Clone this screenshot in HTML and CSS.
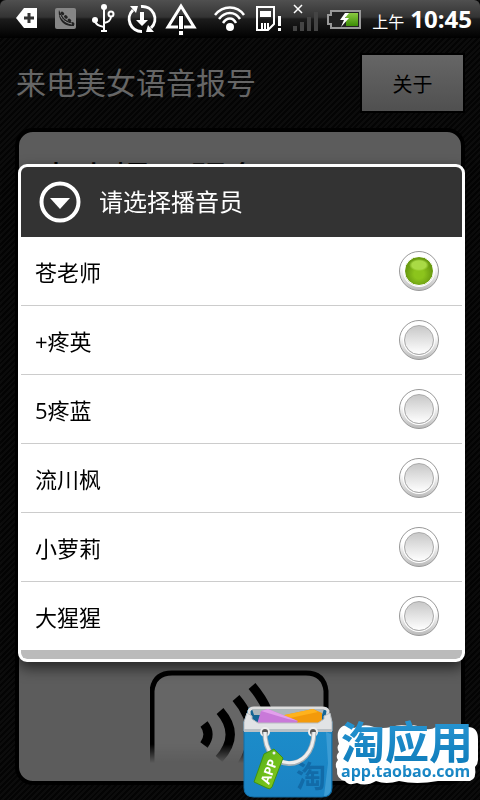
FILE: index.html
```html
<!DOCTYPE html>
<html lang="zh-CN">
<head>
    <meta charset="UTF-8">
    <meta name="viewport" content="width=device-width, initial-scale=1.0">
    <title>来电美女语音报号</title>
    <link rel="stylesheet" href="styles.css">
</head>
<body>
    <div class="status-bar">
        <div class="status-icons">
            <svg width="38" height="38" viewBox="8 0 38 38">
                <path d="M16 18L24 8H37V28H24Z" fill="#fff"/>
                <path d="M29 13V23M24 18H34" stroke="#333" stroke-width="3"/>
            </svg>
            <svg width="38" height="38" viewBox="46 0 38 38">
                <rect x="55" y="8" width="21" height="21" rx="2" fill="#868686"/>
                <path d="M59 10C58 15 60 27 74 26C74 23 73 23 70 22C65 20 62 17 59 10Z" fill="#222"/>
                <path d="M62 13L73 24" stroke="#222" stroke-width="3" stroke-linecap="round" stroke-dasharray="1 4"/>
                <path d="M60 15C62 20 66 23 72 24" stroke="#999" fill="none" stroke-width="1"/>
            </svg>
            <svg width="38" height="38" viewBox="84 0 38 38">
                <g fill="none" stroke="#fff" stroke-width="2">
                    <path d="M104 7V31M95 20C95 25 100 26 104 27M111 16C111 21 108 22 104 23"/>
                    <circle cx="111" cy="14" r="2.5"/>
                </g>
                <circle cx="104" cy="7" r="3" fill="#fff"/>
                <circle cx="95" cy="20" r="3" fill="#fff"/>
                <path d="M101 30H107V32H101Z" fill="#fff"/>
            </svg>
            <svg width="38" height="38" viewBox="122 0 38 38">
                <g fill="none" stroke="#fff" stroke-width="3">
                    <path d="M142 31.500A12.500 12.500 0 0 1 133 10M141 6.500A12.500 12.500 0 0 1 151 28"/>
                </g>
                <path d="M130 6H138L136 13ZM154 32H146L148 25Z" fill="#fff"/>
                <path d="M140 12H144V20H148L142 26L136 20H140Z" fill="#fff"/>
            </svg>
            <svg width="46" height="38" viewBox="160 0 46 38">
                <path d="M181 6L168 27H194Z" fill="none" stroke="#fff" stroke-width="3"/>
                <path d="M178 15H184V36H178Z" fill="#0c0c0c"/>
                <path d="M179 16H183V29H179ZM179 31H183V35H179Z" fill="#fff"/>
            </svg>
            <svg width="46" height="38" viewBox="206 0 46 38">
                <g fill="none" stroke="#fff" stroke-width="2.500">
                    <path d="M215 15C223 5 237 5 244 15M219 19C225 11 235 11 240 19M223 23C227 17 233 17 236 23"/>
                </g>
                <circle cx="230" cy="27" r="4" fill="#fff"/>
            </svg>
            <svg width="36" height="38" viewBox="252 0 36 38">
                <path d="M257 7H274V24L268 30H257Z" fill="none" stroke="#fff" stroke-width="2"/>
                <path d="M260 11H271V17H260ZM261 23H263V30H261ZM264 23H266V30H264ZM267 23H269V29H267ZM278 16H281V26H278ZM278 28H281V31H278Z" fill="#fff"/>
            </svg>
            <svg width="36" height="38" viewBox="288 0 36 38">
                <path d="M294 5L302 13M302 5L294 13" stroke="#fff" stroke-width="1.500"/>
                <path d="M293 26H297V31H293ZM300 22H304V31H300ZM307 17H311V31H307ZM314 12H318V31H314Z" fill="#444"/>
            </svg>
            <svg width="40" height="38" viewBox="324 0 40 38">
                <defs>
                    <linearGradient id="charge" x1="0" y1="0" x2="0" y2="1">
                        <stop offset="0" stop-color="#8bcb42"/>
                        <stop offset="1" stop-color="#3c8d05"/>
                    </linearGradient>
                </defs>
                <path d="M331 11H360V28H331V24H328V15H331Z" fill="#222" stroke="#999" stroke-width="2"/>
                <path d="M346 13H358V26H346Z" fill="url(#charge)"/>
                <path d="M345 13L340 20H344L341 27L349 18H345L349 13Z" fill="#fff"/>
            </svg>
        </div>
        <span class="period">上午</span>
        <span class="clock">10:45</span>
    </div>

    <header class="app-header">
        <h1>来电美女语音报号</h1>
        <button class="about">关于</button>
    </header>

    <main class="panel">
        <h2>来电提示服务</h2>
        <svg class="speaker" width="180" height="94" viewBox="0 0 180 94">
            <defs>
                <linearGradient id="fade" x1="0" y1="0" x2="0" y2="1">
                    <stop offset="0.800" stop-color="#fff"/>
                    <stop offset="1" stop-color="#000"/>
                </linearGradient>
                <mask id="fadeMask">
                    <rect width="180" height="94" fill="url(#fade)"/>
                </mask>
            </defs>
            <g mask="url(#fadeMask)">
                <path d="M2 110V22Q4 4 22 4H156Q174 4 176 22V110" fill="#666" stroke="#000" stroke-width="5"/>
                <g fill="none" stroke="#000" stroke-width="9">
                    <path d="M54 55Q62 65 54 76M70 42Q91 66 69 90M86 29Q116 64 87 103M102 17Q142 64 104 115"/>
                </g>
            </g>
        </svg>
    </main>

    <div class="overlay">
        <form class="dialog" role="dialog" aria-labelledby="dialog-title">
            <div class="dialog-header">
                <svg width="42" height="42" viewBox="0 0 42 42">
                    <circle cx="21" cy="21" r="18.500" fill="none" stroke="#fff" stroke-width="4"/>
                    <path d="M11 17H31L21 28Z" fill="#fff"/>
                </svg>
                <h2 id="dialog-title">请选择播音员</h2>
            </div>
            <div class="options">
                <label class="option">苍老师<input type="radio" name="voice" checked></label>
                <label class="option">+疼英<input type="radio" name="voice"></label>
                <label class="option">5疼蓝<input type="radio" name="voice"></label>
                <label class="option">流川枫<input type="radio" name="voice"></label>
                <label class="option">小萝莉<input type="radio" name="voice"></label>
                <label class="option">大猩猩<input type="radio" name="voice"></label>
            </div>
            <div class="dialog-footer"></div>
        </form>
    </div>

    <div class="store-badge">
        <svg width="240" height="100" viewBox="240 700 240 100">
            <defs>
                <linearGradient id="bag" x1="0" y1="0" x2="0" y2="1">
                    <stop offset="0" stop-color="#1c8fcb"/>
                    <stop offset="1" stop-color="#1b83c4"/>
                </linearGradient>
                <linearGradient id="brand" x1="0" y1="0" x2="0" y2="1">
                    <stop offset="0" stop-color="#2e9bd8"/>
                    <stop offset="1" stop-color="#0b79b8"/>
                </linearGradient>
                <linearGradient id="tag" x1="0" y1="0" x2="1" y2="1">
                    <stop offset="0" stop-color="#4fae1d"/>
                    <stop offset="1" stop-color="#8ccc18"/>
                </linearGradient>
            </defs>
            <!-- bag -->
            <path d="M244 722L249 708H327L332 722V788Q332 797 322 797H254Q244 797 244 788Z" fill="url(#bag)" stroke="#126fa8"/>
            <path d="M249 711Q250 708 254 708H322Q327 708 328 711L326 725H250Z" fill="#146594" stroke="#ddd" stroke-width="3"/>
            <path d="M252 709H324L322 715H254Z" fill="#aeb7bb"/>
            <path d="M280 716L313 709L322 713V724H290Z" fill="#f39a0b"/>
            <path d="M280 716L313 709L318 712L290 718Z" fill="#ffb21c"/>
            <path d="M257 724L261 711L268 709L298 721L294 726Z" fill="#c979d9"/>
            <path d="M261 711L268 709L298 721L288 719Z" fill="#e2a0ec"/>
            <path d="M247 713L252 716V719L258 723H318L324 719V716L330 713L332 722V731H244V722Z" fill="#e1e3e5" stroke="#b8bdc1"/>
            <path d="M244 729H332V732H244Z" fill="#b9c0c5"/>
            <path d="M326 732L331 734V790Q329 796 324 796L328 763Z" fill="#3b9cd4"/>
            <circle cx="265" cy="732" r="4" fill="#555" stroke="#eee" stroke-width="2"/>
            <circle cx="313" cy="732" r="4" fill="#555" stroke="#eee" stroke-width="2"/>
            <text class="bag-mark" x="296" y="787">淘</text>
            <path d="M265 732C264 772 313 776 314 732" fill="none" stroke="#a4aeb4" stroke-width="5"/>
            <path d="M265 732C264 771 313 775 314 732" fill="none" stroke="#eee" stroke-width="3"/>
            <path d="M264 754L274 749L283 758L272 787Q270 790 267 788L254 782Z" fill="url(#tag)" stroke="#3f9212"/>
            <circle cx="274" cy="753" r="1.500" fill="#eee"/>
            <text class="tag-text" transform="translate(269 785) rotate(-70)">APP</text>
            <!-- white sticker edge behind the store name -->
            <path d="M343 726Q349 724 354 728Q365 723 374 727Q383 729 391 727Q399 724 410 726Q416 724 421 728Q430 731 436 727H468Q478 727 478 739V760Q478 764 475 767Q477 779 470 781H438Q416 785 399 781Q386 785 376 781Q366 787 357 783Q348 786 345 781Q336 779 337 769Q334 764 338 760Q335 756 339 752Q336 747 339 744Q335 730 343 726Z" fill="#fff"/>
            <text class="store-name" x="341" y="759">淘应用</text>
            <text class="store-url" x="341" y="777">app.taobao.com</text>
        </svg>
    </div>
</body>
</html>
```
FILE: styles.css
```css
* {
    box-sizing: border-box;
}

body {
    margin: 0;
    min-height: 100vh;
    display: flex;
    flex-direction: column;
    font-family: "Open Sans", "Noto Sans CJK SC", sans-serif;
    background-color: #040404;
    background-image: repeating-linear-gradient(135deg, #040404 0, #040404 2px, #0c0c0c 2px, #0c0c0c 4px);
}

h1,
h2 {
    margin: 0;
    font-weight: normal;
}

/* Status bar */
.status-bar {
    display: flex;
    align-items: center;
    height: 38px;
    padding: 0 8px;
    color: #fff;
    background: linear-gradient(#505050, #333 45%, #1c1c1c 50%, #000);
    border-radius: 6px 6px 0 0;
    white-space: nowrap;
}

.status-icons {
    display: flex;
}

.period {
    margin-left: auto;
    margin-right: 6px;
    padding-top: 6px;
    font-size: 16px;
    line-height: 20px;
}

.clock {
    font-size: 24px;
    line-height: 38px;
    font-weight: bold;
}

/* Page behind the dialog */
.app-header {
    display: flex;
    align-items: center;
    justify-content: space-between;
    height: 90px;
    padding: 0 15px 0 16px;
}

.app-header h1 {
    font-size: 30px;
    line-height: 44px;
    color: #666;
}

.about {
    width: 105px;
    height: 60px;
    border: 2px solid #000;
    font-family: inherit;
    font-size: 20px;
    color: #000;
    background: linear-gradient(#666, #505050);
}

.panel {
    flex: 1;
    display: flex;
    flex-direction: column;
    justify-content: space-between;
    margin: 0 15px 15px;
    padding: 18px;
    border: 4px solid #000;
    border-radius: 18px;
    background-color: #5c5c5c;
}

.panel h2 {
    font-size: 38px;
    line-height: 58px;
}

.speaker {
    align-self: center;
}

/* Dialog */
.overlay {
    position: fixed;
    inset: 0;
    display: flex;
    align-items: center;
    padding: 26px 15px 0 18px;
}

.dialog {
    width: 100%;
    border: 3px solid #fff;
    border-radius: 9px;
    overflow: hidden;
    background-color: #fff;
    box-shadow: 0 6px 14px rgba(0, 0, 0, 0.6);
}

.dialog-header {
    display: flex;
    align-items: center;
    gap: 18px;
    height: 70px;
    padding: 0 18px;
    color: #fff;
    background-color: #333;
}

.dialog-header h2 {
    font-size: 24px;
    line-height: 34px;
}

.option {
    display: flex;
    align-items: center;
    justify-content: space-between;
    height: 69px;
    padding: 0 23px 1px 14px;
    border-bottom: 1px solid #ccc;
    font-size: 22px;
    color: #000;
}

.option:last-child {
    height: 68px;
    border-bottom: none;
}

.option input {
    appearance: none;
    display: grid;
    place-items: center;
    width: 40px;
    height: 40px;
    margin: 0;
    border: 1px solid #999;
    border-radius: 50%;
    background: linear-gradient(#fff 40%, #bbb);
}

.option input::before {
    content: "";
    width: 28px;
    height: 28px;
    border: 1px solid #aaa;
    border-radius: 50%;
    background: linear-gradient(#c8c8c8, #fff);
    box-shadow: 0 0 0 1px #fff;
}

.option input:checked::before {
    border-color: #fff;
    background:
        radial-gradient(ellipse 10px 6px at 50% 8px, #a9da45 70%, transparent),
        radial-gradient(circle at 50% 60%, #8cc41c 5px, #6a9c10 13px);
}

.dialog-footer {
    height: 9px;
    background-color: #bbb;
    border-radius: 0 0 6px 6px;
}

/* Store badge */
.store-badge {
    position: fixed;
    right: 0;
    bottom: 0;
}

.store-badge svg {
    display: block;
}

.bag-mark {
    font-family: "Noto Sans CJK SC", sans-serif;
    font-size: 30px;
    font-weight: bold;
    fill: #126ba8;
}

.tag-text {
    font-size: 13px;
    font-weight: bold;
    fill: #fff;
}

.store-name,
.store-url {
    font-weight: bold;
    fill: url(#brand);
}

.store-name {
    font-family: "Noto Sans CJK SC", sans-serif;
    font-size: 44px;
}

.store-url {
    font-size: 16px;
}
```
